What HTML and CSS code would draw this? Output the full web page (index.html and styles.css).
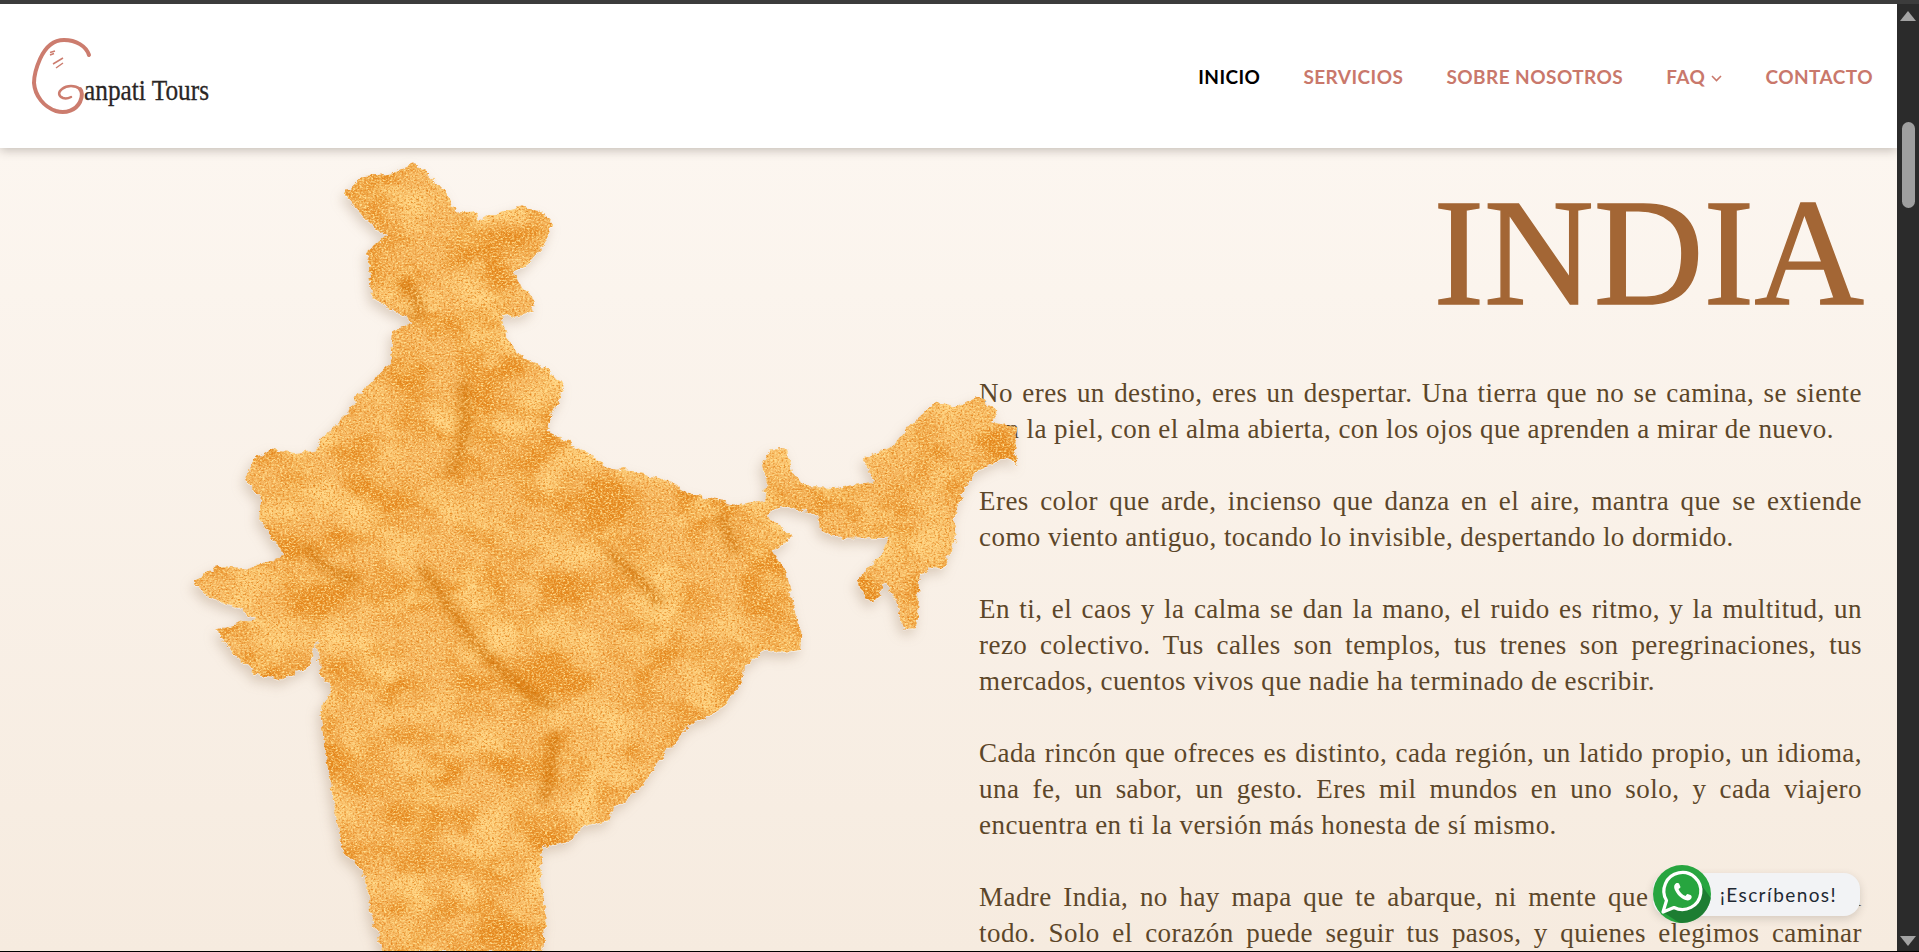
FILE: index.html
```html
<!DOCTYPE html>
<html lang="es">

<head>
    <meta charset="UTF-8" />
    <title>Ganpati Tours</title>
    <link rel="stylesheet" href="styles.css">
</head>

<body>
    <div class="frame">
        <div class="page">
            <header class="site-header">
                <a class="logo" href="#">
                    <svg width="200" height="100" viewBox="0 0 200 100">
                        <!-- trompa -->
                        <path class="logo-line" d="M69 29C66 20 56 14 44 14C33 14 25 22 20 33C16 42 14 50 14 57C15 70 24 81 36 85C46 88 56 84 60 76C63 70 62 65 60 63" />
                        <path class="logo-inner" d="M60 63C55 59 47 59 42 63C38 66 38 70 43 72C46 73 49 72 51 71" />
                        <path class="logo-thin" d="M30 26.500L35 25M30 29L34 27.500M33 38L43 32M36 42L43 37" />
                        <text class="logo-text" x="64" y="74" textLength="125" lengthAdjust="spacingAndGlyphs">anpati Tours</text>
                    </svg>
                </a>
                <nav class="site-nav">
                    <a class="active" href="#">INICIO</a>
                    <a href="#">SERVICIOS</a>
                    <a href="#">SOBRE NOSOTROS</a>
                    <a href="#">FAQ
                        <svg class="caret" width="11" height="7" viewBox="0 0 11 7">
                            <path d="M1 1l4.500 4.500L10 1" />
                        </svg>
                    </a>
                    <a href="#">CONTACTO</a>
                </nav>
            </header>

            <main class="hero">
                <section class="intro">
                    <h1>INDIA</h1>
                    <p>No eres un destino, eres un despertar. Una tierra que no se camina, se siente con la piel, con el alma abierta, con los ojos que aprenden a mirar de nuevo.</p>
                    <p>Eres color que arde, incienso que danza en el aire, mantra que se extiende como viento antiguo, tocando lo invisible, despertando lo dormido.</p>
                    <p>En ti, el caos y la calma se dan la mano, el ruido es ritmo, y la multitud, un rezo colectivo. Tus calles son templos, tus trenes son peregrinaciones, tus mercados, cuentos vivos que nadie ha terminado de escribir.</p>
                    <p>Cada rincón que ofreces es distinto, cada región, un latido propio, un idioma, una fe, un sabor, un gesto. Eres mil mundos en uno solo, y cada viajero encuentra en ti la versión más honesta de sí mismo.</p>
                    <p>Madre India, no hay mapa que te abarque, ni mente que te comprenda del todo. Solo el corazón puede seguir tus pasos, y quienes elegimos caminar contigo nunca volvemos iguales.</p>
                </section>

                <!-- mapa de la India -->
                <svg class="india-map" width="900" height="812" viewBox="0 0 1568 1568" preserveAspectRatio="none">
                    <defs>
                        <path id="india" d="M425 45L445 62L470 90L490 115L497 140L528 138L535 155L560 145L585 135L610 128L640 135L665 155L660 185L645 210L625 238L600 255L612 285L634 305L628 335L600 342L578 335L585 375L600 405L630 430L655 440L686 475L675 510L655 560L690 580L725 605L770 635L810 640L860 655L900 680L950 695L985 705L1035 695L1040 660L1032 625L1045 597L1075 597L1085 640L1105 670L1160 672L1225 660L1207 615L1260 590L1285 555L1335 505L1370 515L1410 495L1440 525L1432 545L1478 555L1470 605L1478 625L1455 615L1405 640L1385 670L1365 730L1370 775L1345 830L1320 825L1305 850L1300 945L1278 945L1265 890L1245 855L1225 895L1205 875L1197 850L1215 825L1240 800L1253 768L1170 770L1132 755L1130 725L1112 718L1065 705L1040 725L1060 745L1085 765L1050 795L1075 840L1085 890L1100 950L1098 985L1060 990L1035 985L1000 1020L995 1050L965 1095L905 1130L865 1180L820 1250L770 1295L765 1315L720 1325L700 1355L650 1365L645 1420L655 1490L650 1568L370 1568L350 1490L340 1420L300 1370L285 1280L270 1180L262 1105L280 1060L262 1025L255 965L245 1015L195 1042L150 1030L110 990L82 945L150 925L120 905L65 880L40 852L85 822L135 828L175 815L200 800L155 730L160 690L130 660L145 620L180 595L215 605L255 600L265 575L315 520L330 490L385 430L388 370L425 350L390 330L350 300L345 215L375 185L340 150L304 105L335 70L385 65Z" />
                        <clipPath id="india-clip">
                            <use href="#india" />
                        </clipPath>
                        <filter id="paper" filterUnits="userSpaceOnUse" x="0" y="0" width="1568" height="1600" color-interpolation-filters="sRGB">
                            <feTurbulence type="fractalNoise" baseFrequency="0.07 0.08" numOctaves="4" seed="7" result="edgeNoise" />
                            <feDisplacementMap in="SourceAlpha" in2="edgeNoise" scale="14" xChannelSelector="R" yChannelSelector="G" result="rough" />
                            <feTurbulence type="fractalNoise" baseFrequency="0.01 0.012" numOctaves="6" seed="23" result="large" />
                            <feColorMatrix in="large" type="matrix" values="0 0 0 0 0.90  0 0 0 0 0.54  0 0 0 0 0.12  3.600 0 0 0 -1.500" result="veins" />
                            <feColorMatrix in="large" type="matrix" values="0 0 0 0 1  0 0 0 0 0.82  0 0 0 0 0.50  0 3.200 0 0 -1.500" result="light" />
                            <feTurbulence type="fractalNoise" baseFrequency="0.26 0.3" numOctaves="3" seed="4" result="fine" />
                            <feColorMatrix in="fine" type="matrix" values="0 0 0 0 1  0 0 0 0 0.87  0 0 0 0 0.56  0 2.800 0 0 -1.150" result="grain" />
                            <feColorMatrix in="fine" type="matrix" values="0 0 0 0 0.89  0 0 0 0 0.52  0 0 0 0 0.12  2.800 0 0 0 -1.350" result="grainDark" />
                            <feFlood flood-color="#f5b45e" result="base" />
                            <feMerge result="tex">
                                <feMergeNode in="base" />
                                <feMergeNode in="veins" />
                                <feMergeNode in="light" />
                                <feMergeNode in="grain" />
                                <feMergeNode in="grainDark" />
                            </feMerge>
                            <feComposite in="tex" in2="rough" operator="in" result="cut" />
                            <feOffset in="rough" dx="0" dy="2" result="edgeOff" />
                            <feFlood flood-color="#ffffff" flood-opacity="0.45" />
                            <feComposite in2="edgeOff" operator="in" result="edge" />
                            <feGaussianBlur in="rough" stdDeviation="10 11" result="blur" />
                            <feOffset in="blur" dx="-5" dy="11" result="off" />
                            <feFlood flood-color="#8a6a4a" flood-opacity="0.28" />
                            <feComposite in2="off" operator="in" result="shadow" />
                            <feMerge>
                                <feMergeNode in="shadow" />
                                <feMergeNode in="edge" />
                                <feMergeNode in="cut" />
                            </feMerge>
                        </filter>
                        <filter id="vein-blur" filterUnits="userSpaceOnUse" x="0" y="0" width="1568" height="1568" color-interpolation-filters="sRGB">
                            <feGaussianBlur in="SourceGraphic" stdDeviation="7" result="soft" />
                            <feTurbulence type="fractalNoise" baseFrequency="0.2 0.24" numOctaves="3" seed="9" />
                            <feColorMatrix type="matrix" values="0 0 0 0 0  0 0 0 0 0  0 0 0 0 0  4 0 0 0 -1.300" result="mask" />
                            <feComposite in="soft" in2="mask" operator="in" />
                        </filter>
                    </defs>
                    <use href="#india" filter="url(#paper)" />
                    <!-- vetas oscuras -->
                    <g clip-path="url(#india-clip)">
                        <g class="veins" filter="url(#vein-blur)">
                            <path d="M440 830C480 880 500 930 530 970C570 1020 610 1060 660 1090" />
                            <path d="M770 800C800 830 820 850 850 890" />
                            <path d="M510 470C520 540 510 600 490 640M960 730C970 750 975 770 985 790" />
                            <path d="M240 790C260 820 290 840 320 850M670 1150C660 1200 665 1240 650 1270M410 280C430 300 440 320 430 340" />
                        </g>
                    </g>
                </svg>

                <a class="whatsapp" href="#">
                    <span class="whatsapp-label">¡Escríbenos!</span>
                    <svg class="whatsapp-icon" width="58" height="58" viewBox="0 0 58 58">
                        <circle cx="29" cy="29" r="29" fill="#27a53f" />
                        <path d="M10 47L44 14L57.800 33A29 29 0 0 1 26 57.800Z" fill="#17632a" opacity="0.6" />
                        <path d="M10 47L13.500 35.500A18.500 18.500 0 1 1 21 42.500Z" fill="#27a53f" stroke="#fff" stroke-width="3.200" stroke-linejoin="round" />
                        <path d="M23.500 18C21.500 19 20.500 21 21.500 24C23.500 29 27.500 33 32.500 35C35.500 36 37.500 35 38.500 33C39 31 38.500 31 37.500 30L34.500 29C33.500 29 33.500 30 32.500 31C29.500 30 26.500 27 25.500 24C26.500 23 27.500 23 27.500 22L26 18.500C25.500 18 24.500 18 23.500 18Z" fill="#fff" />
                    </svg>
                </a>
            </main>
        </div>

        <!-- barra de desplazamiento -->
        <div class="scrollbar">
            <span class="arrow-up"></span>
            <span class="thumb"></span>
            <span class="arrow-down"></span>
        </div>
    </div>
</body>

</html>
```

FILE: styles.css
```css
html,
body {
    height: 100%;
}

body {
    margin: 0;
    overflow: hidden;
    background-color: #000;
    font-family: "Liberation Serif", serif;
}

.frame {
    display: flex;
    height: 951px;
    box-sizing: border-box;
    border-top: 4px solid #3c3c3c;
}

.page {
    flex: 1;
    display: flex;
    flex-direction: column;
    min-width: 0;
    overflow: hidden;
}

.site-header {
    position: relative;
    z-index: 2;
    display: flex;
    align-items: center;
    justify-content: space-between;
    flex-shrink: 0;
    height: 144px;
    padding: 0 24px 0 20px;
    background-color: #fff;
    box-shadow: 0 2px 10px rgba(60, 50, 40, 0.3);
}

.logo {
    display: block;
    height: 100px;
}

.logo-line {
    fill: none;
    stroke: #cc7c6e;
    stroke-width: 4;
    stroke-linecap: round;
}

.logo-inner {
    fill: none;
    stroke: #cc7c6e;
    stroke-width: 2.500;
    stroke-linecap: round;
}

.logo-thin {
    fill: none;
    stroke: #cc7c6e;
    stroke-width: 1.500;
}

.logo-text {
    font-family: "Liberation Serif", serif;
    font-size: 29px;
    fill: #2a2625;
    stroke: #2a2625;
    stroke-width: 0.3;
}

.site-nav {
    display: flex;
    align-items: center;
    gap: 43px;
}

.site-nav a {
    color: #c9786b;
    font-family: "Lato", sans-serif;
    font-size: 19px;
    font-weight: 700;
    letter-spacing: 0.45px;
    text-decoration: none;
}

.site-nav a.active {
    color: #000;
}

.caret {
    margin-left: 1px;
    vertical-align: 2px;
}

.caret path {
    fill: none;
    stroke: #c9786b;
    stroke-width: 1.600;
}

.hero {
    position: relative;
    flex: 1;
    min-height: 0;
    background: linear-gradient(180deg, #fcf6f0 0%, #f6ebdf 100%);
}

.india-map {
    position: absolute;
    z-index: 1;
    left: 170px;
    top: -8px;
}

.veins path {
    fill: none;
    stroke: #cf7206;
    stroke-width: 20;
    stroke-linecap: round;
    opacity: 0.8;
}

.intro {
    width: 883px;
    margin-left: auto;
    padding: 29px 35px 0 0;
    color: #5c4629;
}

.intro h1 {
    margin: 0 -2px 46px 0;
    color: #a36635;
    font-size: 152px;
    font-weight: 400;
    line-height: 1;
    text-align: right;
    -webkit-text-stroke: 1.5px #a36635;
}

.intro p {
    margin: 0 0 36px;
    font-size: 27px;
    letter-spacing: 0.45px;
    line-height: 36px;
    text-align: justify;
}

.whatsapp {
    position: absolute;
    z-index: 2;
    right: 37px;
    bottom: 35px;
    display: flex;
    align-items: center;
    color: #1f2933;
    text-decoration: none;
}

.whatsapp-icon {
    position: absolute;
    left: 0;
    top: -8px;
}

.whatsapp-label {
    display: block;
    height: 43px;
    padding: 0 23px 0 67px;
    border-radius: 16px;
    background-color: #f2f3f5;
    box-shadow: 0 3px 8px rgba(80, 70, 60, 0.2);
    font-family: "Lato", sans-serif;
    font-size: 19px;
    letter-spacing: 1.4px;
    line-height: 43px;
}

.scrollbar {
    position: relative;
    flex-shrink: 0;
    width: 22px;
    background-color: #2b2b2b;
}

.thumb {
    position: absolute;
    left: 5px;
    top: 118px;
    width: 13px;
    height: 86px;
    border-radius: 7px;
    background-color: #9f9f9f;
}

.arrow-up,
.arrow-down {
    position: absolute;
    left: 3px;
    width: 0;
    height: 0;
    border-left: 8px solid transparent;
    border-right: 8px solid transparent;
}

.arrow-up {
    top: 7px;
    border-bottom: 10px solid #a3a3a3;
}

.arrow-down {
    bottom: 5px;
    border-top: 10px solid #a3a3a3;
}
```
